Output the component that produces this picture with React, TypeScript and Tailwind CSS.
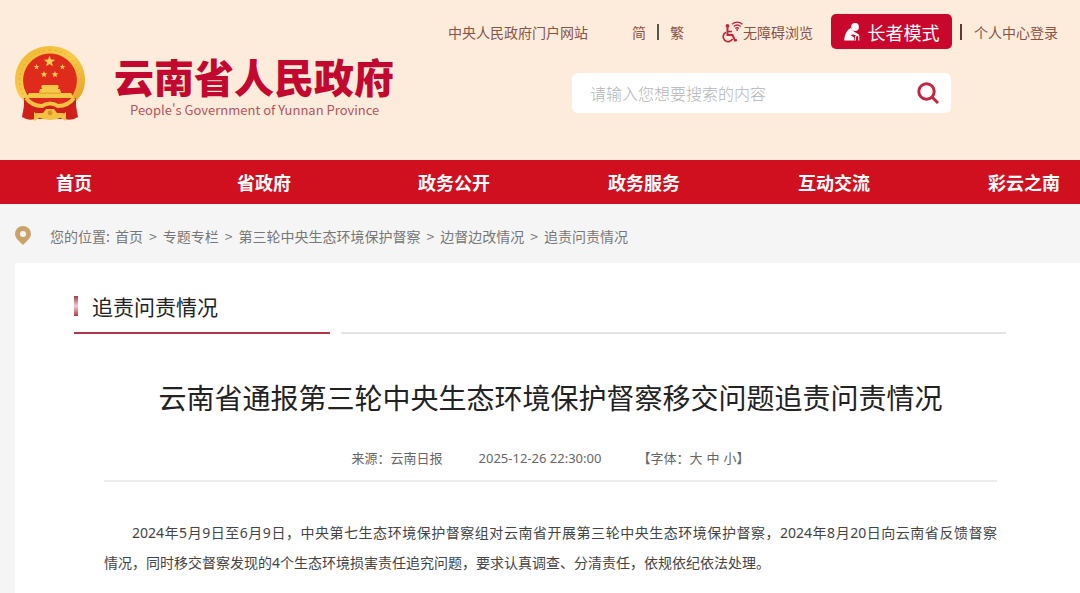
import React, { useState } from 'react';

const navItems = ['首页', '省政府', '政务公开', '政务服务', '互动交流', '彩云之南'];

const crumbs = ['首页', '专题专栏', '第三轮中央生态环境保护督察', '边督边改情况', '追责问责情况'];

const star = (cx: number, cy: number, r: number) => {
  const points: string[] = [];
  for (let i = 0; i < 10; i++) {
    const radius = i % 2 === 0 ? r : r * 0.4;
    const angle = (Math.PI / 5) * i - Math.PI / 2;
    points.push(`${cx + radius * Math.cos(angle)},${cy + radius * Math.sin(angle)}`);
  }
  return points.join(' ');
};

const Emblem = () => (
  <svg viewBox="0 0 70 75" className="h-[75px] w-[70px] shrink-0" role="img" aria-label="国徽">
    <defs>
      <linearGradient id="gold" x1="0" y1="0" x2="1" y2="1">
        <stop offset="0" stopColor="#eeb52f" />
        <stop offset="0.5" stopColor="#f8cc4b" />
        <stop offset="1" stopColor="#e2a12a" />
      </linearGradient>
    </defs>
    {/* Wreath */}
    <path d="M35 0 C55 0 70 15 70 34 C70 44 66 51 60 56 L10 56 C4 51 0 44 0 34 C0 15 15 0 35 0 Z" fill="url(#gold)" />
    <path d="M35 4 A30.500 30.500 0 0 1 61 50 M35 4 A30.500 30.500 0 0 0 9 50" fill="none" stroke="#e5a930" strokeWidth="1" strokeDasharray="2 3" />
    <path d="M35 7.500 A27 27 0 0 1 57 50 L13 50 A27 27 0 0 1 35 7.500 Z" fill="#df2b1b" />
    {/* Stars */}
    <g fill="#f8cf52">
      <polygon points={star(34.500, 15.500, 6)} />
      <polygon points={star(21.500, 21, 3)} />
      <polygon points={star(47.500, 21, 3)} />
      <polygon points={star(29, 28.500, 3.500)} />
      <polygon points={star(40, 28.500, 3.500)} />
    </g>
    {/* Gate tower */}
    <g fill="#f6c848">
      <path d="M27 39 L43 39 L44 41.500 L26 41.500 Z" />
      <rect x="27" y="41" width="16" height="3" />
      <path d="M25 43 L45 43 L46 47 L24 47 Z" />
      <path d="M14 47 L56 47 L59 52 L11 52 Z" />
    </g>
    <path d="M24 47.200 H46" stroke="#d98d25" strokeWidth="0.8" />
    {/* Ribbons */}
    <path d="M9 52 L61 52 L61 60 L63 71 Q57 75 50 73 L20 73 Q13 75 7 71 L9 60 Z" fill="#cf1f1b" />
    <path d="M16 52 L54 52 L58 56 Q48 60 42 57 Q35 53 28 57 Q22 60 12 56 Z" fill="#dd2a1c" />
    <path d="M11 52 Q17 60 27 60 Q35 55 43 60 Q53 60 59 52" fill="none" stroke="#f4c144" strokeWidth="4" />
    <path d="M31 63 H39 L42 67 L49 67 L45 72 Q35 76 25 72 L21 67 L28 67 Z" fill="#f4c144" />
    <circle cx="35" cy="67" r="2.400" fill="#dd8f28" />
    <path d="M19 66 L26 71 L19 75 Z M51 66 L44 71 L51 75 Z" fill="#f4c144" />
  </svg>
);

const WheelchairIcon = () => (
  <svg viewBox="0 0 22 22" className="h-[22px] w-[22px]" fill="none" stroke="#c4233d" aria-hidden="true">
    <circle cx="6.500" cy="5" r="1.900" fill="#c4233d" stroke="none" />
    <path d="M6.500 7 V14 H11.500 L14 19.500 L16 19" strokeWidth="2" />
    <path d="M7 10.500 H11" strokeWidth="1.600" />
    <path d="M5 11.300 A4.900 4.900 0 1 0 11.500 17.800" strokeWidth="1.700" />
    <g strokeWidth="1.400">
      <path d="M11 3.300 Q16 -1 21.500 3.300" />
      <path d="M12.800 5.500 Q16 2.600 19.700 5.500" />
      <path d="M14.300 7.500 Q16 6 18 7.500" />
    </g>
    <circle cx="16.200" cy="9" r="1" fill="#c4233d" stroke="none" />
  </svg>
);

const ElderIcon = () => (
  <svg viewBox="0 0 16 18" className="h-[18px] w-4" fill="#fff" aria-hidden="true">
    <circle cx="11" cy="4" r="3.900" />
    <path d="M6.500 5 C2.500 7.500 0.500 12 0.300 17.500 H10.500 L10 14.500 L6.500 12 L9 11.500 L13.500 13 L15 11.500 L10 8.700 Z" />
    <path d="M11.500 17.500 V13.500 Q13 11.500 14.800 13 V17.500" fill="none" stroke="#fff" strokeWidth="1.100" />
  </svg>
);

const SearchIcon = () => (
  <svg viewBox="0 0 22 22" className="h-[22px] w-[22px]" fill="none" stroke="#c0273f" strokeWidth="3" aria-hidden="true">
    <circle cx="9.500" cy="9.500" r="7.700" />
    <path d="M15 15 L21 21" />
  </svg>
);

const PinIcon = () => (
  <svg viewBox="0 0 16 19" className="h-[19px] w-4" aria-hidden="true">
    <path fillRule="evenodd" fill="#c9a36a" d="M8 0 A8 8 0 0 1 16 8 C16 12 12 15 8 19 C4 15 0 12 0 8 A8 8 0 0 1 8 0 Z M8 5 A3 3 0 1 0 8 11 A3 3 0 1 0 8 5 Z" />
  </svg>
);

const App = () => {
  const [keyword, setKeyword] = useState('');
  const [fontSize, setFontSize] = useState('中');

  return (
    <div lang="zh-CN" className="min-h-screen overflow-x-hidden bg-[#f5f5f5] font-['Noto_Sans_CJK_SC',sans-serif]">
      {/* Header */}
      <header className="flex h-40 items-start justify-between bg-[#fdecdc] pr-[22px] pl-[15px]">
        <a href="#" className="flex shrink-0 gap-[29px] pt-[46px]">
          <Emblem />
          <span className="flex flex-col gap-1.5 pt-[10px]">
            <span className="text-[40px] leading-10 font-black whitespace-nowrap text-[#c3082f]">云南省人民政府</span>
            <span className="pl-4 text-[13px] leading-4 whitespace-nowrap text-[#b5545c]">
              People's Government of Yunnan Province
            </span>
          </span>
        </a>

        <div className="flex shrink-0 flex-col pt-[14px]">
          <div className="flex h-[35px] items-center text-sm whitespace-nowrap text-[#8a5347]">
            <a href="#" className="mr-11">中央人民政府门户网站</a>
            <a href="#">简</a>
            <span className="mx-[11px] h-4 w-0.5 bg-[#4d5b47]" />
            <a href="#" className="mr-[37px]">繁</a>
            <a href="#" className="mr-[18px] flex items-center">
              <WheelchairIcon />
              无障碍浏览
            </a>
            <button type="button" className="flex h-[35px] w-[121px] items-center justify-center gap-2 rounded-[5px] bg-[#c9062b] text-lg text-white">
              <ElderIcon />
              长者模式
            </button>
            <span className="mr-3 ml-2 h-4 w-0.5 bg-[#5b3a33]" />
            <a href="#">个人中心登录</a>
          </div>

          <form
            className="mt-6 mr-[107px] flex h-10 w-[379px] items-center self-end rounded-md bg-white pr-3 pl-[18px]"
            onSubmit={(e) => e.preventDefault()}
          >
            <input
              type="text"
              aria-label="搜索"
              value={keyword}
              onChange={(e) => setKeyword(e.target.value)}
              placeholder="请输入您想要搜索的内容"
              className="min-w-0 flex-1 bg-transparent text-base font-light text-gray-700 outline-none placeholder:text-[#b5b5b5]"
            />
            <button type="submit" aria-label="搜索">
              <SearchIcon />
            </button>
          </form>
        </div>
      </header>

      {/* Main nav */}
      <nav className="overflow-hidden bg-[#d0101f]">
        <ul className="-mr-[39px] -ml-[21px] grid grid-cols-6">
          {navItems.map((item) => (
            <li key={item} className="text-center">
              <a href="#" className="text-lg leading-[44px] font-bold text-white">{item}</a>
            </li>
          ))}
        </ul>
      </nav>

      {/* Breadcrumb */}
      <div className="flex h-[59px] items-center gap-[19px] pt-1 pl-[15px] text-sm whitespace-nowrap text-[#777]">
        <PinIcon />
        <div className="flex">
          <span className="mr-[5px]">您的位置:</span>
          <ol className="flex gap-1.5">
            {crumbs.map((crumb, i) => (
              <li key={crumb} className="flex gap-1.5">
                {i > 0 && <span>&gt;</span>}
                <a href="#">{crumb}</a>
              </li>
            ))}
          </ol>
        </div>
      </div>

      {/* Content */}
      <main className="ml-[15px] min-h-[330px] bg-white pr-[74px] pl-[59px]">
        <div className="flex gap-[11px] pt-[25px]">
          <h2 className="flex w-[256px] items-center gap-[14px] border-b-2 border-[#b23448] pb-2 text-[21px] leading-9 text-[#222]">
            <span className="h-5 w-1 bg-linear-to-b from-[#a33a50] via-[#f0ccd2] to-[#b23448]" />
            追责问责情况
          </h2>
          <div className="flex-1 border-b-2 border-[#e4e4e4]" />
        </div>

        <article className="mr-[9px] ml-[30px] font-['Noto_Sans','Noto_Sans_CJK_SC',sans-serif]">
          <h1 className="pt-11 text-center text-[28px] leading-10 whitespace-nowrap text-[#222]">
            云南省通报第三轮中央生态环境保护督察移交问题追责问责情况
          </h1>

          <div className="flex justify-center gap-9 border-b-2 border-[#ececec] pt-[30px] pb-3 text-[13px] leading-5 whitespace-nowrap text-[#666]">
            <span>来源：云南日报</span>
            <time>2025-12-26 22:30:00</time>
            <div className="flex">
              <span>【字体：</span>
              <span className="flex gap-1">
                {['大', '中', '小'].map((size) => (
                  <button key={size} type="button" aria-pressed={fontSize === size} onClick={() => setFontSize(size)}>
                    {size}
                  </button>
                ))}
              </span>
              <span>】</span>
            </div>
          </div>

          <p className="pt-9 text-justify indent-[28px] text-sm leading-[30px] text-[#444]">
            2024年5月9日至6月9日，中央第七生态环境保护督察组对云南省开展第三轮中央生态环境保护督察，2024年8月20日向云南省反馈督察
            <span className="whitespace-nowrap">情况，</span>同时移交督察发现的4个生态环境损害责任追究问题，要求认真调查、分清责任，依规依纪依法处理。
          </p>
        </article>
      </main>
    </div>
  );
};

export default App;
